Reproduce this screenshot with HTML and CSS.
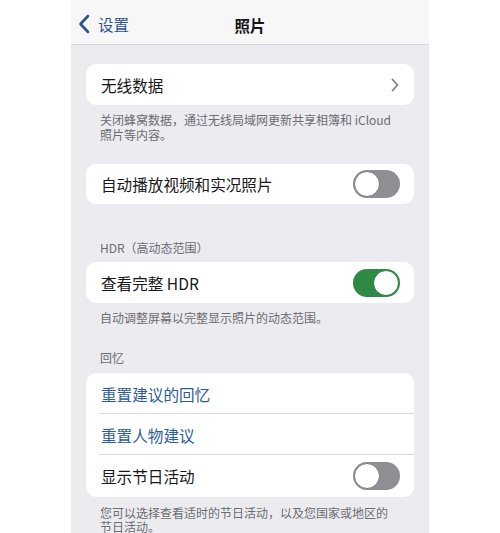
FILE: index.html
```html
<!DOCTYPE html>
<html lang="zh-CN">
<head>
<meta charset="utf-8">
<title>照片</title>
<link rel="stylesheet" href="styles.css">
</head>
<body>
<div class="phone">
  <div class="nav">
    <div class="back">
      <svg class="back-chev" width="12" height="20" viewBox="0 0 12 20"><path d="M10 2 L2.5 10 L10 18" fill="none" stroke="#2b5290" stroke-width="2.6" stroke-linecap="round" stroke-linejoin="round"/></svg>
      <span class="back-text">设置</span>
    </div>
    <div class="title">照片</div>
  </div>
  <div class="content">
    <div class="card c1">
      <div class="row">
        <span class="label">无线数据</span>
        <svg class="chev" width="8" height="14" viewBox="0 0 8 14"><path d="M1.5 1.5 L6.5 7 L1.5 12.5" fill="none" stroke="#808085" stroke-width="1.8" stroke-linecap="round" stroke-linejoin="round"/></svg>
      </div>
    </div>
    <div class="foot f1"><div class="line">关闭蜂窝数据，通过无线局域网更新共享相簿和 iCloud</div><div class="line">照片等内容。</div></div>

    <div class="card c2">
      <div class="row">
        <span class="label">自动播放视频和实况照片</span>
        <span class="toggle"><span class="knob"></span></span>
      </div>
    </div>

    <div class="head h1">HDR（高动态范围）</div>
    <div class="card">
      <div class="row">
        <span class="label">查看完整 HDR</span>
        <span class="toggle on"><span class="knob"></span></span>
      </div>
    </div>
    <div class="foot f3">自动调整屏幕以完整显示照片的动态范围。</div>

    <div class="head h2">回忆</div>
    <div class="card">
      <div class="row sep"><span class="label link">重置建议的回忆</span></div>
      <div class="row sep"><span class="label link">重置人物建议</span></div>
      <div class="row last">
        <span class="label">显示节日活动</span>
        <span class="toggle"><span class="knob"></span></span>
      </div>
    </div>
    <div class="foot f5"><div class="line">您可以选择查看适时的节日活动，以及您国家或地区的</div><div class="line">节日活动。</div></div>
  </div>
</div>
</body>
</html>
```
FILE: styles.css
```css
html, body {
  margin: 0;
  padding: 0;
  background: #ffffff;
}
body {
  font-family: "Noto Sans CJK SC", "Noto Sans", sans-serif;
  width: 500px;
  height: 533px;
  overflow: hidden;
}
.phone {
  width: 358px;
  height: 533px;
  margin-left: 71px;
  background: #ebebf0;
  overflow: hidden;
}
.nav {
  height: 44px;
  background: #f7f7f8;
  border-bottom: 1px solid #d3d3d7;
  display: flex;
  align-items: center;
  justify-content: center;
  position: relative;
}
.back {
  position: absolute;
  left: 7px;
  top: 14px;
  display: flex;
  align-items: center;
  gap: 8px;
}
.back-text {
  color: #2b5290;
  font-size: 15.5px;
  line-height: 20px;
}
.title {
  font-size: 15.5px;
  font-weight: 700;
  color: #161618;
  margin-top: 5px;
}
.content {
  padding: 0 15px;
}
.card {
  background: #ffffff;
  border-radius: 10px;
  overflow: hidden;
}
.c1 { margin-top: 19px; }
.c2 { margin-top: 22px; }
.row {
  height: 41px;
  display: flex;
  align-items: center;
  justify-content: space-between;
  padding: 0 14px 0 15px;
  position: relative;
}
.c2 .row { height: 40px; }
.row.last { height: 42px; }
.row.sep::after {
  content: "";
  position: absolute;
  left: 13px;
  right: 0;
  bottom: 0;
  height: 1px;
  background: #d9d9de;
}
.label {
  font-size: 15.6px;
  color: #18181a;
}
.label.link {
  color: #2d5d98;
}
.chev {
  margin-right: 1px;
}
.toggle {
  width: 47px;
  height: 28px;
  border-radius: 14px;
  background: #8e8e93;
  position: relative;
  flex: none;
}
.toggle .knob {
  position: absolute;
  left: 1px;
  top: 1px;
  width: 24px;
  height: 24px;
  border-radius: 50%;
  background: #ffffff;
  border: 1px solid #7a7a7e;
}
.toggle.on {
  background: #2e8a45;
}
.toggle.on .knob {
  left: auto;
  right: 1px;
  border-color: #2a7a3e;
}
.foot {
  font-size: 12px;
  line-height: 14px;
  color: #6c6c71;
  padding: 8px 15px 0 14px;
}
.foot .line {
  white-space: nowrap;
}
.f1 {
  line-height: 15px;
  padding-top: 7px;
}
.head {
  font-size: 12px;
  line-height: 14px;
  color: #6c6c71;
  padding: 0 15px 0 14px;
}
.h1 { margin-top: 37px; margin-bottom: 7px; }
.f3 { padding-top: 8px; }
.h2 { margin-top: 26px; margin-bottom: 8px; }
.f5 { padding-top: 9px; }
```
